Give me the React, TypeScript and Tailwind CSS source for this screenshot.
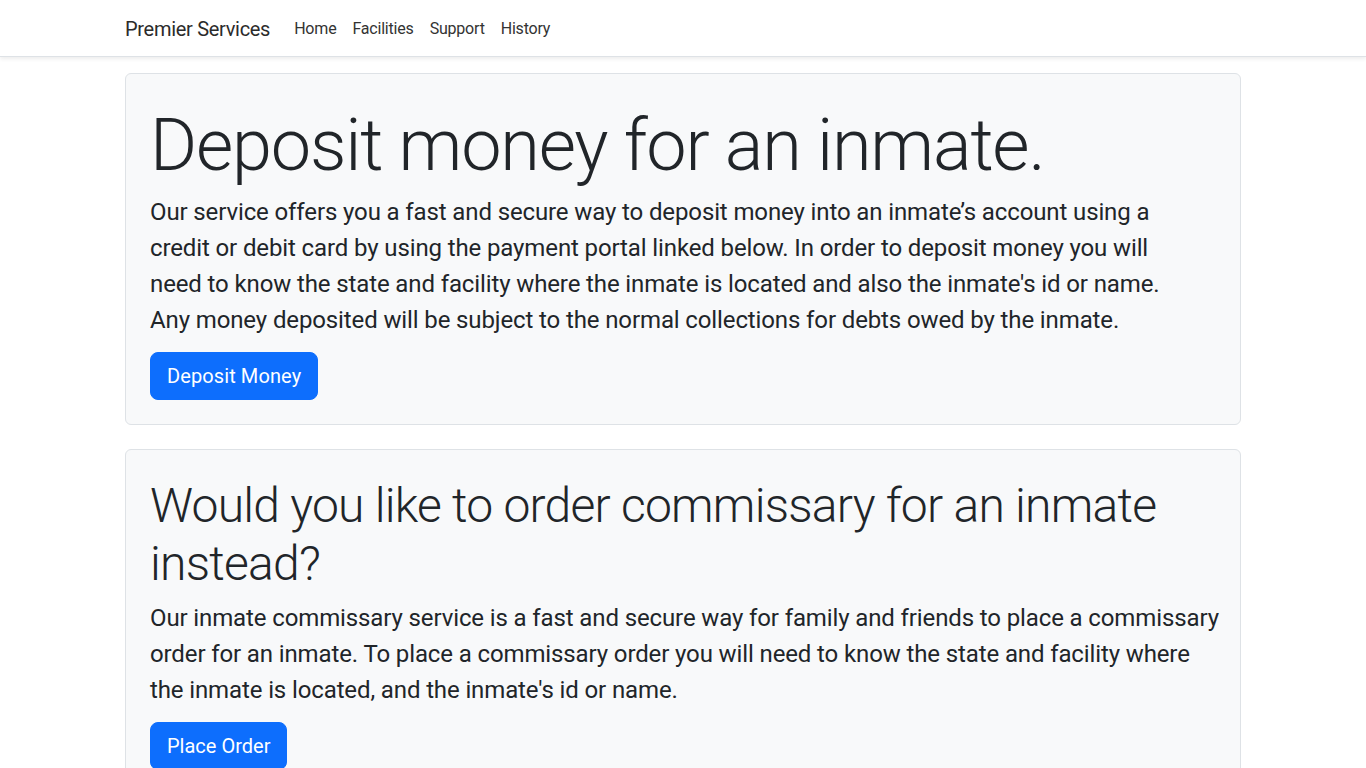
const links = ["Home", "Facilities", "Support", "History"];

const depositLines = [
  "Our service offers you a fast and secure way to deposit money into an inmate’s account using a",
  "credit or debit card by using the payment portal linked below. In order to deposit money you will",
  "need to know the state and facility where the inmate is located and also the inmate's id or name.",
  "Any money deposited will be subject to the normal collections for debts owed by the inmate.",
];

const orderLines = [
  "Our inmate commissary service is a fast and secure way for family and friends to place a commissary",
  "order for an inmate. To place a commissary order you will need to know the state and facility where",
  "the inmate is located, and the inmate's id or name.",
];

function Lines({ lines }: { lines: string[] }) {
  return (
    <p className="mb-[14px] pt-[2px] text-2xl leading-9 tracking-[-0.12px]">
      {lines.map((line) => (
        <span key={line} className="block whitespace-nowrap">
          {line}
        </span>
      ))}
    </p>
  );
}

export default function App() {
  return (
    <div className="min-h-screen bg-white font-['Roboto','Liberation_Sans',sans-serif] text-[#212529]">
      {/* Navbar */}
      <header className="border-b border-[#dee2e6] bg-white shadow-[0_2px_4px_rgba(0,0,0,0.075)]">
        <div className="mx-auto flex h-14 max-w-[1140px] items-center px-3 pt-0.5">
          <a href="#" className="mr-4 text-xl leading-[30px] tracking-[-0.3px] text-[#2b2b2b]">
            Premier Services
          </a>
          <nav className="flex items-center">
            {links.map((l) => (
              <a key={l} href="#" className="px-2 text-base leading-6 tracking-[-0.2px] text-[#333]">
                {l}
              </a>
            ))}
          </nav>
        </div>
      </header>

      <main className="mx-auto max-w-[1140px] px-3 pt-4">
        {/* Deposit card */}
        <section className="mb-6 rounded-md border border-[#dee2e6] bg-[#f8f9fa] p-6">
          <h1 className="mb-[3px] pt-[5px] text-[72px] font-light leading-[1.2] tracking-[-1.2px]">
            Deposit money for an inmate.
          </h1>
          <Lines lines={depositLines} />
          <a
            href="#"
            className="inline-block rounded-lg border border-[#0d6efd] bg-[#0d6efd] px-4 py-2 text-xl leading-[30px] tracking-[0.1px] text-white"
          >
            Deposit Money
          </a>
        </section>

        {/* Commissary card */}
        <section className="mb-6 rounded-md border border-[#dee2e6] bg-[#f8f9fa] p-6">
          <h2 className="mb-[5px] pt-[3px] text-5xl font-light leading-[1.2] tracking-[-0.75px]">
            Would you like to order commissary for an inmate instead?
          </h2>
          <Lines lines={orderLines} />
          <a
            href="#"
            className="inline-block rounded-lg border border-[#0d6efd] bg-[#0d6efd] px-4 py-2 text-xl leading-[30px] text-white"
          >
            Place Order
          </a>
        </section>
      </main>
    </div>
  );
}
